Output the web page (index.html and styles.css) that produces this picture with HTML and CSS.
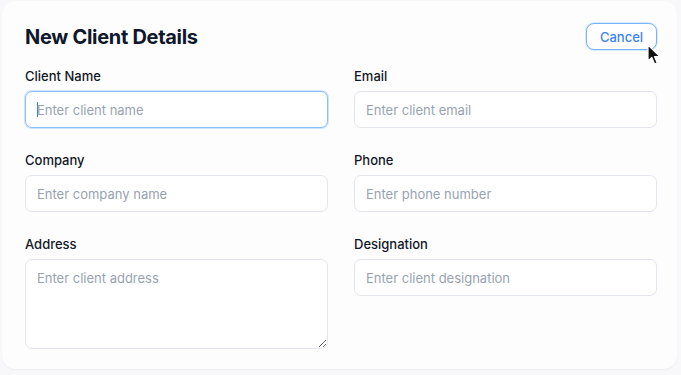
FILE: index.html
```html
<!DOCTYPE html>
<html lang="en">
<head>
<meta charset="utf-8">
<title>New Client Details</title>
<link rel="stylesheet" href="styles.css">
</head>
<body>
<div class="card">
  <div class="header">
    <h1 class="title">New Client Details</h1>
    <div class="cancel-wrap">
      <button class="cancel" type="button">Cancel</button>
      <svg class="pointer" width="14" height="22" viewBox="0 0 14 22" aria-hidden="true">
        <path d="M1 1 L1 17 L4.8 13.4 L7.6 20 L10.2 18.9 L7.5 12.5 L12.6 12.4 Z" fill="#111" stroke="#fff" stroke-width="1.2" stroke-linejoin="round"/>
      </svg>
    </div>
  </div>
  <form class="grid">
    <div class="field">
      <label class="label">Client Name</label>
      <div class="input-wrap">
        <input class="input focused" type="text" placeholder="Enter client name">
        <span class="caret"></span>
      </div>
    </div>
    <div class="field">
      <label class="label">Email</label>
      <input class="input" type="email" placeholder="Enter client email">
    </div>
    <div class="field">
      <label class="label">Company</label>
      <input class="input" type="text" placeholder="Enter company name">
    </div>
    <div class="field">
      <label class="label">Phone</label>
      <input class="input" type="text" placeholder="Enter phone number">
    </div>
    <div class="field">
      <label class="label">Address</label>
      <textarea class="input textarea" placeholder="Enter client address"></textarea>
    </div>
    <div class="field">
      <label class="label">Designation</label>
      <input class="input" type="text" placeholder="Enter client designation">
    </div>
  </form>
</div>
</body>
</html>
```
FILE: styles.css
```css
* { box-sizing: border-box; }
html, body { margin: 0; padding: 0; }
body {
  background: #f8f8fa;
  font-family: Inter, "Noto Sans", Arial, sans-serif;
  width: 681px;
  height: 375px;
  overflow: hidden;
}
.card {
  margin: 1px 2px;
  width: 675px;
  height: 368px;
  background: #fdfdfe;
  border-radius: 14px;
  box-shadow: 0 1px 2px rgba(15, 23, 42, 0.04);
  padding: 22px 20px 0 23px;
}
.header {
  display: flex;
  justify-content: space-between;
  align-items: center;
  height: 27px;
  margin-bottom: 18px;
}
.title {
  margin: 0;
  font-size: 20px;
  font-weight: 700;
  color: #0f172a;
  letter-spacing: -0.3px;
  line-height: 26px;
}
.cancel-wrap { position: relative; }
.cancel {
  display: block;
  height: 27px;
  width: 71px;
  border: 1px solid #7cb3fb;
  background: #fff;
  border-radius: 8px;
  color: #3b82f6;
  font-family: inherit;
  font-size: 13px;
  font-weight: 500;
  padding: 0;
  box-shadow: 0 0 0 1px rgba(147, 197, 253, 0.35);
}
.pointer {
  position: absolute;
  left: 61px;
  top: 21px;
}
.grid {
  display: grid;
  grid-template-columns: 303px 303px;
  column-gap: 26px;
  row-gap: 24px;
}
.field { display: flex; flex-direction: column; }
.label {
  font-size: 13px;
  font-weight: 500;
  color: #111827;
  line-height: 16px;
  margin-bottom: 7px;
}
.input-wrap { position: relative; }
.input {
  display: block;
  width: 100%;
  height: 37px;
  border: 1px solid #e3e6ec;
  border-radius: 7px;
  background: #fff;
  padding: 0 11px;
  font-family: inherit;
  font-size: 13px;
  color: #111827;
  outline: none;
}
.input::placeholder { color: #98a2b3; }
.focused {
  border-color: #8fbdf9;
  box-shadow: 0 0 0 1px rgba(147, 197, 253, 0.45);
}
.caret {
  position: absolute;
  left: 12px;
  top: 11px;
  width: 1px;
  height: 15px;
  background: #3b82f6;
}
.textarea {
  height: 90px;
  padding: 10px 11px;
  line-height: 16px;
  resize: vertical;
}
```
